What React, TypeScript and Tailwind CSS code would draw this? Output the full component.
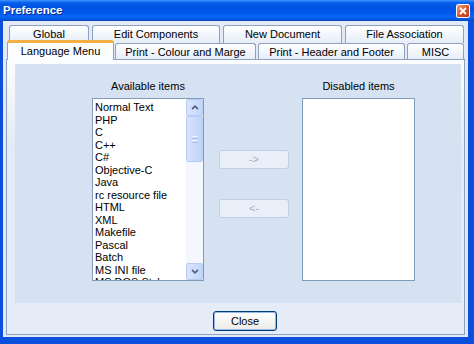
import React from "react";

const availableItems = [
  "Normal Text",
  "PHP",
  "C",
  "C++",
  "C#",
  "Objective-C",
  "Java",
  "rc resource file",
  "HTML",
  "XML",
  "Makefile",
  "Pascal",
  "Batch",
  "MS INI file",
  "MS DOS Style",
];

const Chevron = ({ up }: { up?: boolean }) => (
  <svg width="8" height="5" viewBox="0 0 8 5">
    <polyline
      points={up ? "1,4.2 4,1.2 7,4.2" : "1,0.8 4,3.8 7,0.8"}
      fill="none"
      stroke="#4d6185"
      strokeWidth="1.7"
    />
  </svg>
);

const BackTab = ({ label, className }: { label: string; className: string }) => (
  <div
    className={`h-[18px] flex items-center justify-center border border-b-0 border-[#8ea1be] rounded-t-[3px] bg-[linear-gradient(#ffffff,#e6edf8)] ${className}`}
  >
    {label}
  </div>
);

const FrontTab = ({ label, className }: { label: string; className: string }) => (
  <div
    className={`h-[16px] pt-[2px] flex items-center justify-center border border-b-0 border-[#8ea1be] rounded-t-[3px] bg-[linear-gradient(#ffffff,#e6edf8)] ${className}`}
  >
    {label}
  </div>
);

const ScrollButton = ({ up }: { up?: boolean }) => (
  <div className="h-[17px] flex items-center justify-center border border-[#b7ccf5] rounded-[2px] bg-[linear-gradient(to_right,#d9e5fd,#c3d5fb)]">
    <Chevron up={up} />
  </div>
);

const App = () => {
  return (
    <div className="w-[474px] h-[344px] flex flex-col bg-[#0c4fdc] font-['Liberation_Sans',Arial,sans-serif] text-[11px] text-black overflow-hidden">
      {/* title bar */}
      <div className="h-[21px] flex items-center justify-between pl-[3px] pr-[4px] bg-[linear-gradient(to_bottom,#3d95ff_0%,#0a62ee_12%,#0054e3_30%,#0056ea_60%,#0a66f8_80%,#0052d6_95%,#0041b0_100%)]">
        <span className="text-white font-bold text-[11.5px] [text-shadow:1px_1px_0_#0a2a8a]">
          Preference
        </span>
        <div className="w-[14px] h-[14px] flex items-center justify-center rounded-[2px] border border-white bg-[linear-gradient(135deg,#f0a080,#d5532b_55%,#b93a17)]">
          <svg width="8" height="8" viewBox="0 0 8 8">
            <path d="M1 1 L7 7 M7 1 L1 7" stroke="white" strokeWidth="1.8" />
          </svg>
        </div>
      </div>

      {/* dialog body */}
      <div className="ml-[3px] mr-[6px] mb-[7px] flex-1 flex flex-col pt-[4px] px-[3px] bg-[#e3eaf6]">
        {/* back row of tabs */}
        <div className="flex h-[18px]">
          <BackTab label="Global" className="ml-[3px] w-[80px]" />
          <BackTab label="Edit Components" className="ml-[3px] w-[128px]" />
          <BackTab label="New Document" className="ml-[3px] w-[119px]" />
          <BackTab label="File Association" className="ml-[3px] w-[119px]" />
        </div>
        {/* front row of tabs */}
        <div className="flex items-end h-[16px]">
          <div className="relative z-10 ml-[1px] w-[107px] h-[20px] -mb-[1px] flex items-center justify-center border-x border-[#8ea1be] border-t-[3px] border-t-[#f2b043] rounded-t-[3px] bg-[#fcfdfe]">
            Language Menu
          </div>
          <FrontTab label="Print - Colour and Marge" className="ml-[1px] w-[141px]" />
          <FrontTab label="Print - Header and Footer" className="ml-[2px] w-[147px]" />
          <FrontTab label="MISC" className="ml-[2px] w-[57px]" />
        </div>

        {/* tab page */}
        <div className="h-[276px] border border-[#8ea1be] bg-[linear-gradient(#fcfdfe,#e4ebf6_30%,#e6edf8)] flex flex-col">
          <div className="ml-[8px] mt-[4px] w-[446px] h-[239px] bg-[#d6e1f1] flex pl-[77px]">
            {/* available items */}
            <div className="w-[112px] flex flex-col">
              <div className="h-[34px] pt-[16px] leading-[13px] text-center">Available items</div>
              <div className="h-[183px] flex border border-[#7f9db9] bg-white">
                <div className="flex-1 overflow-hidden pl-[2px] pt-[2px]">
                  {availableItems.map((item) => (
                    <div key={item} className="leading-[12.5px] whitespace-nowrap">
                      {item}
                    </div>
                  ))}
                </div>
                <div className="w-[17px] flex flex-col bg-[#f4f7fe]">
                  <ScrollButton up />
                  <div className="h-[46px] flex flex-col items-center justify-center gap-[1px] border border-[#b7ccf5] rounded-[2px] bg-[linear-gradient(to_right,#d6e3fd,#c0d3fb)]">
                    <div className="w-[6px] h-[1px] bg-[#eef3fe]" />
                    <div className="w-[6px] h-[1px] bg-[#a9c0ee]" />
                    <div className="w-[6px] h-[1px] bg-[#eef3fe]" />
                    <div className="w-[6px] h-[1px] bg-[#a9c0ee]" />
                  </div>
                  <div className="flex-1" />
                  <ScrollButton />
                </div>
              </div>
            </div>

            {/* move buttons */}
            <div className="ml-[15px] w-[70px] pt-[86px] flex flex-col gap-[30px]">
              <button className="h-[19px] border border-[#c3cfe1] rounded-[3px] bg-[#e9eff9] text-[#a3acbb] leading-none">
                -&gt;
              </button>
              <button className="h-[19px] border border-[#c3cfe1] rounded-[3px] bg-[#e9eff9] text-[#a3acbb] leading-none">
                &lt;-
              </button>
            </div>

            {/* disabled items */}
            <div className="ml-[13px] w-[113px] flex flex-col">
              <div className="h-[34px] pt-[16px] leading-[13px] text-center">Disabled items</div>
              <div className="h-[183px] border border-[#7f9db9] bg-white" />
            </div>
          </div>

          <button className="mt-[8px] ml-[206px] w-[64px] h-[20px] border border-[#003c74] rounded-[3px] bg-[linear-gradient(#ffffff,#ecebe6)] shadow-[inset_0_0_0_1px_#98b8ea] leading-none">
            Close
          </button>
        </div>
      </div>
    </div>
  );
};

export default App;
